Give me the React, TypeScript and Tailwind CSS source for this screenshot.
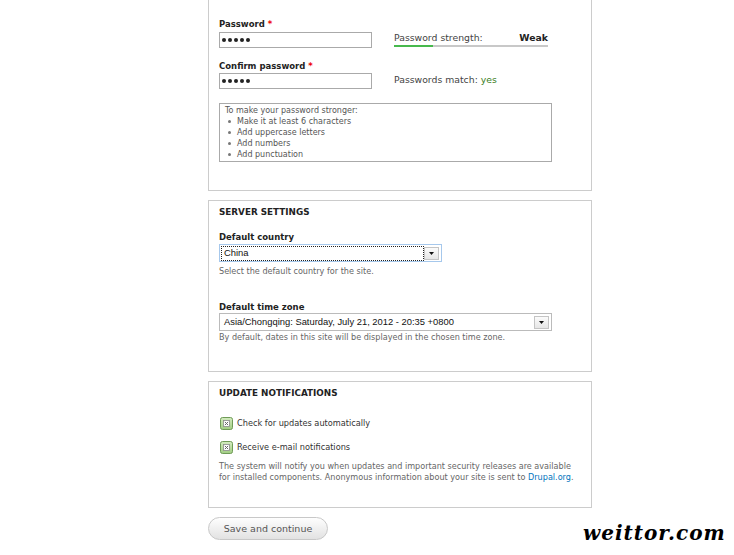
import React from 'react';

const Dots = () => (
  <div className="flex items-center gap-[2px]">
    {[0, 1, 2, 3, 4].map((i) => (
      <span key={i} className="block w-[4px] h-[4px] rounded-full bg-[#222]" />
    ))}
  </div>
);

const Arrow = () => (
  <div className="flex items-center justify-center w-[15px] h-[13px] border border-[#c4c4c4] bg-linear-to-b from-[#fbfbfb] to-[#e6e6e6]">
    <svg width="5" height="3" viewBox="0 0 5 3">
      <polygon points="0,0 5,0 2.5,3" fill="#111" />
    </svg>
  </div>
);

const Select = ({ text, focused, className }: { text: string; focused?: boolean; className: string }) => (
  <div
    className={`flex items-center h-[18px] border bg-white pr-[2px] ${focused ? 'border-[#a6c8ec]' : 'border-[#bbb]'} ${className}`}
  >
    <div
      className={`flex-1 flex items-center h-[15px] ml-[1px] pl-[2px] border border-dotted font-['Liberation_Sans',Arial,sans-serif] text-[9.4px] text-[#111] ${
        focused ? 'border-[#222]' : 'border-transparent'
      }`}
    >
      {text}
    </div>
    <Arrow />
  </div>
);

const Checkbox = () => (
  <svg width="13" height="13" viewBox="0 0 13 13">
    <defs>
      <linearGradient id="cbg" x1="0" y1="0" x2="0" y2="1">
        <stop offset="0" stopColor="#d4ecc0" />
        <stop offset="1" stopColor="#a0cc82" />
      </linearGradient>
    </defs>
    <rect x="0.5" y="0.5" width="12" height="12" rx="2" fill="url(#cbg)" stroke="#6f9b57" />
    <rect x="3.5" y="3.5" width="6" height="6" fill="#fff" stroke="#8a8a8a" strokeWidth="0.8" />
    <path d="M4.9 4.9 L8.1 8.1 M8.1 4.9 L4.9 8.1" stroke="#666" strokeWidth="1" />
  </svg>
);

const Label = ({ children, required }: { children: React.ReactNode; required?: boolean }) => (
  <div className="h-[12px] leading-[12px] text-[8.5px] font-bold text-[#222]">
    {children}
    {required && <span className="text-[#e00]"> *</span>}
  </div>
);

const App: React.FC = () => {
  const tips = ['Make it at least 6 characters', 'Add uppercase letters', 'Add numbers', 'Add punctuation'];

  return (
    <div className="relative w-[734px] h-[555px] overflow-hidden bg-white font-['DejaVu_Sans',Verdana,sans-serif] text-[#333]">
      <div className="ml-[208px] w-[384px]">
        {/* Account fieldset, top scrolled away */}
        <div className="border-x border-b border-[#ccc] pl-[10px] pt-[18px] pb-[28px]">
          <div className="flex items-start">
            <div className="w-[153px]">
              <Label required>Password</Label>
              <div className="mt-[2px] h-[16px] flex items-center pl-[2px] border border-[#aaa] bg-white">
                <Dots />
              </div>
            </div>
            <div className="ml-[22px] mt-[14px] w-[154px]">
              <div className="flex justify-between h-[12px] leading-[12px] text-[9.3px] text-[#444]">
                <span>Password strength:</span>
                <span className="font-bold text-[#222]">Weak</span>
              </div>
              <div className="mt-[1px] h-[2px] bg-[#c8c8c8]">
                <div className="h-full w-[39px] bg-[#47b94d]" />
              </div>
            </div>
          </div>

          <div className="flex items-start mt-[12px]">
            <div className="w-[153px]">
              <Label required>Confirm password</Label>
              <div className="mt-[1px] h-[16px] flex items-center pl-[2px] border border-[#aaa] bg-white">
                <Dots />
              </div>
            </div>
            <div className="ml-[22px] mt-[14px] h-[12px] leading-[12px] text-[9.3px] text-[#444]">
              Passwords match: <span className="text-[#3a7d22]">yes</span>
            </div>
          </div>

          <div className="mt-[14px] w-[333px] border border-[#aaa] py-[1px] pl-[5px] text-[8px] leading-[11px] text-[#555]">
            <div>To make your password stronger:</div>
            <ul>
              {tips.map((t) => (
                <li key={t} className="flex items-center">
                  <span className="ml-[3px] mr-[6px] w-[3px] h-[3px] rounded-full bg-[#777]" />
                  {t}
                </li>
              ))}
            </ul>
          </div>
        </div>

        {/* Server settings */}
        <div className="mt-[9px] border border-[#ccc] px-[10px] pt-[5px] pb-[28px]">
          <div className="h-[12px] leading-[12px] text-[8.8px] font-bold text-[#222] uppercase">Server settings</div>
          <div className="mt-[13px]">
            <Label>Default country</Label>
          </div>
          <Select text="China" focused className="mt-[1px] w-[223px]" />
          <div className="mt-[4px] h-[11px] leading-[11px] text-[8.1px] text-[#666]">
            Select the default country for the site.
          </div>
          <div className="mt-[24px]">
            <Label>Default time zone</Label>
          </div>
          <Select text="Asia/Chongqing: Saturday, July 21, 2012 - 20:35 +0800" className="w-[333px]" />
          <div className="mt-[1px] h-[11px] leading-[11px] text-[8.1px] text-[#666]">
            By default, dates in this site will be displayed in the chosen time zone.
          </div>
        </div>

        {/* Update notifications */}
        <div className="mt-[9px] border border-[#ccc] px-[10px] pt-[5px] pb-[25px]">
          <div className="h-[12px] leading-[12px] text-[8.8px] font-bold text-[#222] uppercase">Update notifications</div>
          <div className="mt-[18px] flex items-center h-[13px] pl-[1px]">
            <Checkbox />
            <span className="ml-[4px] text-[8.2px] text-[#333]">Check for updates automatically</span>
          </div>
          <div className="mt-[11px] flex items-center h-[13px] pl-[1px]">
            <Checkbox />
            <span className="ml-[4px] text-[8.2px] text-[#333]">Receive e-mail notifications</span>
          </div>
          <p className="mt-[7px] text-[8.1px] leading-[10.6px] text-[#666]">
            The system will notify you when updates and important security releases are available
            <br />
            for installed components. Anonymous information about your site is sent to{' '}
            <span className="text-[#0074bd]">Drupal.org</span>.
          </p>
        </div>

        <button className="mt-[9px] w-[120px] h-[23px] flex items-center justify-center rounded-full border border-[#c8c8c8] bg-linear-to-b from-[#fefefe] to-[#e2e2e2] text-[9.5px] text-[#555]">
          Save and continue
        </button>
      </div>

      <div className="absolute left-[583px] top-[521px] leading-[24px] tracking-[1px] font-['DejaVu_Serif',serif] italic font-bold text-[20px] text-black">
        weittor.com
      </div>
    </div>
  );
};

export default App;
